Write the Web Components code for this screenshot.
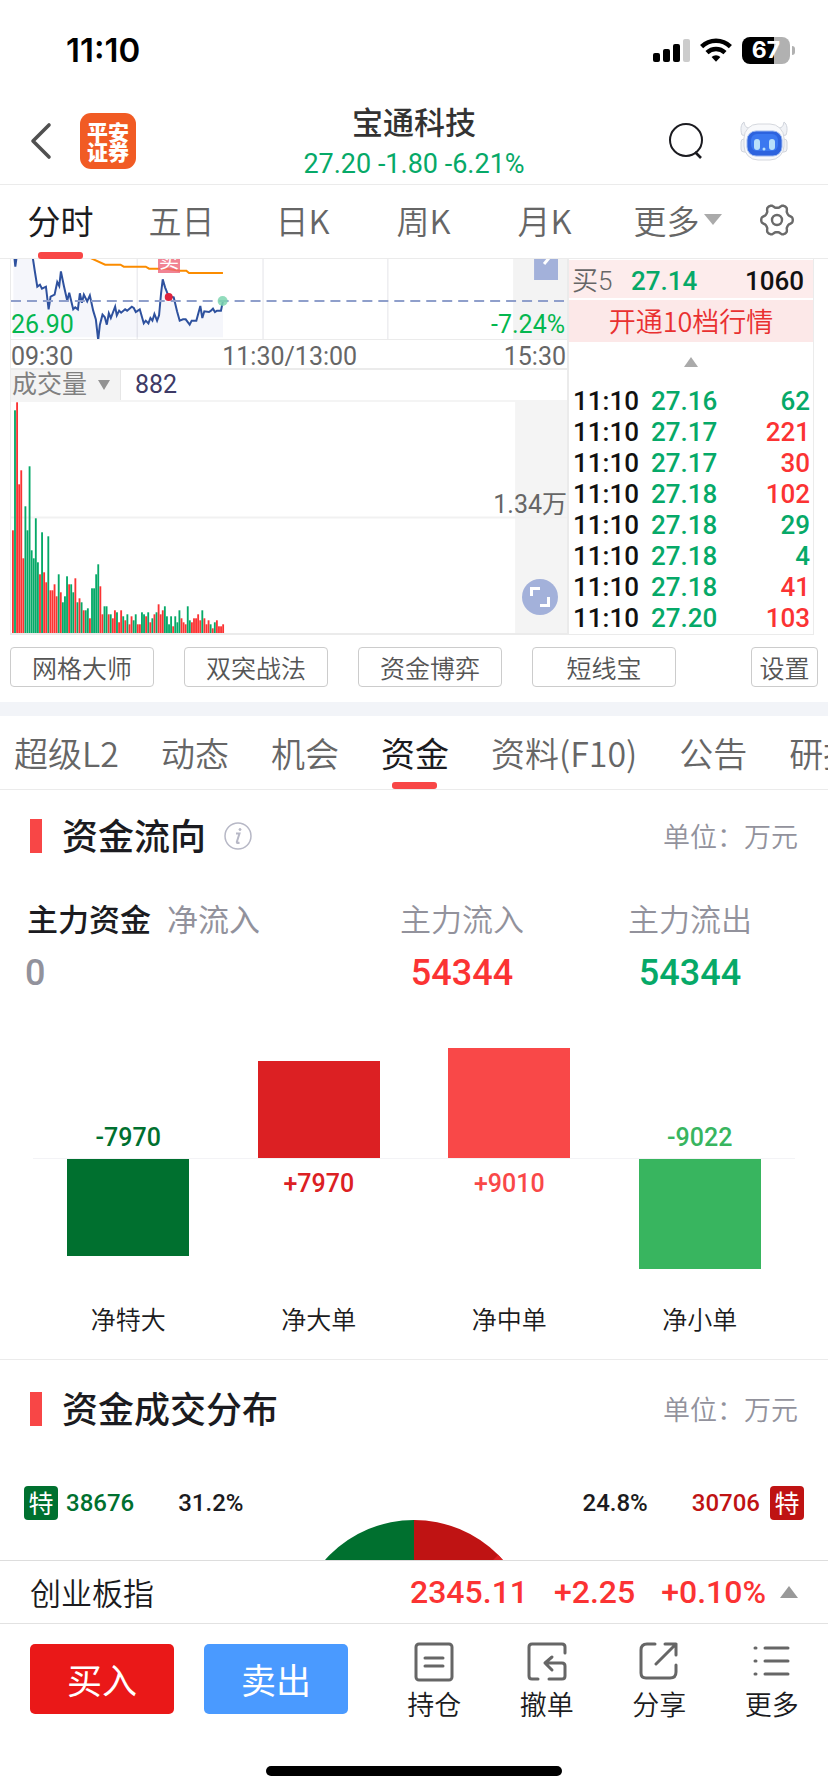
<!DOCTYPE html>
<html lang="zh-CN">
<head>
<meta charset="utf-8">
<meta name="viewport" content="width=device-width, initial-scale=1">
<title>宝通科技</title>
<style>
  :root {
    --cjk: "Noto Sans CJK SC", sans-serif;
    --num: Roboto, "Noto Sans CJK SC", sans-serif;
    --up: #fb3333;
    --down: #06a968;
    --accent: #f84646;
    --ink: #1b1b20;
    --soft: #666;
    --mute: #92929c;
    --line: #ebebeb;
  }
  html, body { margin: 0; }
  body { font-family: var(--cjk); color: var(--ink); background: #fff; }
</style>
</head>
<body>
<stock-app>
  <status-bar slot="top"></status-bar>
  <stock-header slot="top" name="宝通科技" quote="27.20 -1.80 -6.21%"></stock-header>
  <period-tabs slot="top"></period-tabs>

  <quote-board></quote-board>
  <tool-row></tool-row>
  <info-tabs></info-tabs>
  <fund-section heading="资金流向" unit="单位：万元" info>
    <fund-summary></fund-summary>
    <flow-chart>
      <flow-bar label="净特大" value="-7970" color="#00702f"></flow-bar>
      <flow-bar label="净大单" value="+7970" color="#dc2023"></flow-bar>
      <flow-bar label="净中单" value="+9010" color="#f94848"></flow-bar>
      <flow-bar label="净小单" value="-9022" color="#38b55f"></flow-bar>
    </flow-chart>
  </fund-section>
  <fund-section heading="资金成交分布" unit="单位：万元" class="later">
    <deal-split></deal-split>
  </fund-section>

  <index-ticker slot="dock"></index-ticker>
  <trade-bar slot="dock"></trade-bar>
</stock-app>

<script>
const base = `:host,*,::before,::after{box-sizing:border-box}button{font:inherit;color:inherit;background:none;border:0;padding:0;margin:0;cursor:pointer}svg{display:block}`;

function define(name, render, ready) {
  customElements.define(name, class extends HTMLElement {
    constructor() {
      super();
      this.attachShadow({ mode: 'open' });
    }
    connectedCallback() {
      const t = document.createElement('template');
      t.innerHTML = `<style>${base}</style>` + render(this);
      this.shadowRoot.replaceChildren(t.content.cloneNode(true));
      if (ready) ready(this.shadowRoot, this);
    }
  });
}

define('stock-app', () => `
<style>
  :host { display: flex; flex-direction: column; height: 100vh; }
  main { flex: 1; min-height: 0; overflow: hidden auto; scrollbar-width: none; }
  header { position: relative; z-index: 1; }
  footer { border-top: 1px solid #ddd; background: #fff; }
</style>
<header><slot name="top"></slot></header>
<main><slot></slot></main>
<footer><slot name="dock"></slot></footer>`);

define('status-bar', () => `
<style>
  :host { display: flex; align-items: center; justify-content: space-between; height: 100px; padding: 0 33px 0 66px; color: #000; }
  time { font: 600 33px/40px Inter, sans-serif; }
  .icons { display: flex; align-items: center; gap: 10px; }
  .battery { display: flex; align-items: center; gap: 2px; }
  .cell { width: 48px; height: 27px; border-radius: 8px; background: linear-gradient(90deg, #000 67%, #b1b1b1 67%); color: #fff; font: 700 23px/27px Inter, sans-serif; text-align: center; }
  .nub { width: 3px; height: 9px; border-radius: 0 3px 3px 0; background: #b1b1b1; }
</style>
<time>11:10</time>
<div class="icons">
  <svg width="37" height="24" viewBox="0 0 37 24"><rect y="15" width="7" height="9" rx="2"/><rect x="10" y="11" width="7" height="13" rx="2"/><rect x="20" y="6" width="7" height="18" rx="2"/><rect x="30" y="1" width="7" height="23" rx="2" fill="#ccc"/></svg>
  <svg width="32" height="24" viewBox="0 0 32 24"><g fill="none" stroke="#000" stroke-width="4.4"><path d="M1.6 8.6a20.5 20.5 0 0 1 28.8 0"/><path d="M7 14.6a13 13 0 0 1 18 0"/></g><path d="M11.6 19a6.4 6.4 0 0 1 8.8 0L16 23.8z"/></svg>
  <div class="battery"><div class="cell">67</div><div class="nub"></div></div>
</div>`);

define('stock-header', el => `
<style>
  :host { display: grid; grid-template-columns: 1fr auto 1fr; align-items: center; height: 85px; padding: 0 29px 4px; border-bottom: 1px solid var(--line); }
  .left, .right { display: flex; align-items: center; }
  .left { gap: 28px; }
  .right { justify-content: flex-end; gap: 36px; padding-right: 11px; }
  .logo { width: 56px; height: 56px; border-radius: 11px; background: #f15b24; color: #fff; font-weight: 900; font-size: 21px; line-height: 20px; display: grid; place-content: center; text-align: center; }
  .mid { text-align: center; }
  h1 { margin: 0; font-weight: 500; font-size: 31px; line-height: 42px; color: #333; }
  p { margin: 0; padding-top: 4px; font: 400 27px/36px var(--num); color: var(--down); }
</style>
<div class="left">
  <button aria-label="返回"><svg width="23" height="38" viewBox="0 0 23 38" fill="none" stroke="#505050" stroke-width="3.6" stroke-linecap="round" stroke-linejoin="round"><path d="M20 3 4 19l16 16"/></svg></button>
  <div class="logo">平安<br>证券</div>
</div>
<div class="mid"><h1>${el.getAttribute('name')}</h1><p>${el.getAttribute('quote')}</p></div>
<div class="right">
  <button aria-label="搜索"><svg width="36" height="38" viewBox="0 0 36 38" fill="none" stroke="#1b1b20" stroke-width="2"><circle cx="18" cy="18" r="16"/><path d="m27 30 6 6" stroke-width="2.6"/></svg></button>
  <button aria-label="智能助手"><svg width="48" height="40" viewBox="0 0 48 40">
    <g stroke="#d0d4dc" fill="#f0f2f6"><path d="M2 14C0 8 1 3 4 1c1 6 4 7 8 5l-4 9zM46 14c2-6 1-11-2-13-1 6-4 7-8 5l4 9z"/><rect x="1" y="18" width="8" height="13" rx="3"/><rect x="39" y="18" width="8" height="13" rx="3"/></g>
    <rect x="4" y="3" width="40" height="36" rx="14" fill="#f8f9fb" stroke="#d5d8de"/>
    <rect x="7" y="10" width="35" height="25" rx="9" fill="#2d63de" stroke="#9ab6ef"/>
    <rect x="11" y="13" width="27" height="17" rx="6" fill="#3b78f0"/>
    <rect x="14" y="18" width="6" height="11" rx="3" fill="#b9e0fa"/><rect x="29" y="18" width="6" height="11" rx="3" fill="#b9e0fa"/>
    <circle cx="24" cy="28" r="1.5" fill="#b9e0fa"/></svg></button>
</div>`);

define('period-tabs', () => `
<style>
  :host { display: grid; grid-template-columns: repeat(6, 121fr) 102fr; height: 74px; padding-bottom: 4px; border-bottom: 1px solid var(--line); font-weight: 350; font-size: 33px; line-height: 44px; color: var(--soft); }
  button { display: flex; align-items: center; justify-content: center; gap: 4px; position: relative; }
  .on { color: var(--ink); font-weight: 400; }
  .on::after { content: ""; position: absolute; bottom: -5px; width: 45px; height: 7px; border-radius: 3px; background: var(--accent); }
  .more { padding-left: 24px; }
</style>
<button class="on">分时</button><button>五日</button><button>日K</button><button>周K</button><button>月K</button>
<button class="more">更多<svg width="18" height="11" viewBox="0 0 18 11"><path d="M0 0h18L9 11z" fill="#aaa"/></svg></button>
<button aria-label="图表设置"><svg width="36" height="36" viewBox="-18 -18 36 36" fill="none" stroke="#6a6a6a" stroke-width="2.4" stroke-linejoin="round"><path id="gear"/><circle r="5"/></svg></button>`,
root => {
  const pts = [];
  for (let d = 0; d < 360; d += 5) {
    const w = Math.cos(6 * d * Math.PI / 180);
    const r = 14 + 1.8 * Math.sign(w) * Math.sqrt(Math.abs(w));
    const a = d * Math.PI / 180;
    pts.push((r * Math.cos(a)).toFixed(1) + ' ' + (r * Math.sin(a)).toFixed(1));
  }
  root.getElementById('gear').setAttribute('d', 'M' + pts.join('L') + 'Z');
});

define('quote-board', () => `
<style>
  :host { display: grid; grid-template-columns: 557fr 247fr; height: 376px; padding: 0 14px 0 10px; }
</style>
<chart-pane></chart-pane><order-pane></order-pane>`);

define('chart-pane', () => `
<style>
  :host { display: flex; flex-direction: column; min-width: 0; border-left: 1px solid var(--line); font: 400 25px/30px var(--num); color: var(--soft); }
  .price, .volume { position: relative; }
  .price { height: 81px; border-bottom: 1px solid var(--line); }
  svg.plot { width: 100%; height: 100%; }
  .low, .pct { position: absolute; color: #04b74f; bottom: -1px; }
  .low { left: 0; } .pct { right: 2px; }
  .times { display: flex; justify-content: space-between; height: 30px; border-bottom: 2px solid var(--line); padding-right: 1px; line-height: 34px; }
  .times span:nth-child(2) { flex: 1; padding-left: 149px; }
  .head { display: flex; align-items: center; gap: 14px; height: 32px; border-bottom: 2px solid #f4f4f4; color: #3d3a66; line-height: 32px; }
  .head button { display: flex; align-items: center; gap: 11px; height: 30px; padding: 0 10px 0 1px; background: #f3f3f3; border-right: 1px solid #e6e6e6; color: #808080; }
  .volume { flex: 1; border-bottom: 2px solid var(--line); }
  .scale { position: absolute; right: 0; top: 88px; }
  .full { position: absolute; right: 9px; bottom: 18px; }
  .badge { position: absolute; left: 147px; top: -9px; width: 22px; height: 23px; overflow: hidden; background: rgba(238,100,120,.8); color: #fff; font-size: 20px; line-height: 22px; text-align: center; }
  .clip { position: absolute; inset: 0; overflow: hidden; }
</style>
<div class="price">
  <svg class="plot" viewBox="0 0 557 80" preserveAspectRatio="none">
    <rect x="503" width="54" height="80" fill="#f3f3f3"/>
    <path d="M126.5 0v80M252.5 0v80M377.5 0v80" stroke="#ededf0" stroke-width="1.5"/>
    <g transform="translate(-11 -9) scale(.333333)">
      <path id="fill" fill="#3355b0" fill-opacity=".05"/>
      <path id="line" fill="none" stroke="#2e519e" stroke-width="6"/>
      <path d="M272 24 316 44H362L372 50H438L448 56H500L540 62H560L568 69H670" fill="none" stroke="#fb8c00" stroke-width="6"/>
    </g>
    <path d="M0 42H557" stroke="#8f9fcb" stroke-width="2" stroke-dasharray="10 6"/>
    <circle cx="158" cy="38" r="4" fill="#e0223c"/><circle cx="212" cy="42" r="5" fill="#7fd6b0" fill-opacity=".85"/>
    <path d="M524 0h24v21h-24z" fill="#a3b1da"/><path d="m534 5 5-6" stroke="#fff" stroke-width="3"/>
  </svg>
  <div class="clip"><span class="badge">卖</span></div>
  <span class="low">26.90</span><span class="pct">-7.24%</span>
</div>
<div class="times"><span>09:30</span><span>11:30/13:00</span><span>15:30</span></div>
<div class="head"><button>成交量<svg width="12" height="10" viewBox="0 0 12 10"><path d="M0 0h12L6 10z" fill="#929292"/></svg></button><span>882</span></div>
<div class="volume">
  <svg class="plot" viewBox="0 0 557 231" preserveAspectRatio="none">
    <rect x="505" width="52" height="231" fill="#f4f4f4"/>
    <path d="M0 115.5H557" stroke="#f1f1f1" stroke-width="2"/>
    <g id="bars"></g>
  </svg>
  <span class="scale">1.34万</span>
  <button class="full" aria-label="全屏"><svg width="36" height="36" viewBox="0 0 36 36" fill="none"><circle cx="18" cy="18" r="18" fill="#a3b1da"/><path d="M9.5 17V9.5H18M18 26.5h8.5V18" stroke="#fff" stroke-width="3"/></svg></button>
</div>`,
root => {
  const line = '98 20 104 60 112 110 120 104 126 116 138 110 146 178 152 140 164 134 172 96 178 108 183 64 192 108 202 152 208 128 220 178 226 172 234 178 240 130 246 158 252 134 262 154 270 136 280 182 288 208 295 270 300 225 308 194 315 202 321 224 327 190 333 204 346 170 351 196 358 182 364 188 376 178 382 182 396 170 402 174 408 186 420 178 432 220 438 212 446 220 452 204 458 212 464 192 472 212 478 196 484 130 489 88 496 112 508 142 514 140 522 142 532 184 540 212 550 208 558 208 570 224 576 212 590 212 602 168 608 204 614 184 628 186 634 182 640 176 646 186 652 182 664 182 670 153';
  root.getElementById('line').setAttribute('d', 'M43 20 46 50 50 20M' + line);
  root.getElementById('fill').setAttribute('d', 'M40 20H98L' + line + 'V262H40Z');
  const vols = 'R308 G668 R692 R446 R488 R224 G380 G308 G500 G248 G224 G344 G212 R176 G302 R182 R152 G290 R128 R128 R146 R110 G176 R122 G92 G110 G170 R146 G146 G122 R164 G92 R104 G92 R68 G68 G74 R44 G134 G134 G176 G206 R140 R56 G80 G80 R56 G56 R44 R68 G62 R32 R68 G50 R38 G56 R26 R50 G38 G56 R26 R26 G62 G56 R50 G62 R32 G44 R56 G62 R86 R56 R68 G80 G50 G26 G50 R20 G50 G32 G68 R44 R32 R26 G80 G38 R32 R44 R44 R56 R38 G68 R44 R26 R38 G26 R14 G32 R38 R20 R20 R26';
  root.getElementById('bars').innerHTML = vols.split(' ').map((v, i) => {
    const h = v.slice(1) / 3;
    return `<rect x="${(1 + i * 2.085).toFixed(2)}" y="${(231 - h).toFixed(1)}" width="1.85" height="${h.toFixed(1)}" fill="${v[0] === 'R' ? '#fb3333' : '#06a968'}"/>`;
  }).join('');
});

define('order-pane', () => {
  const rows = [['27.16', 62, 'd'], ['27.17', 221, 'u'], ['27.17', 30, 'u'], ['27.18', 102, 'u'], ['27.18', 29, 'd'], ['27.18', 4, 'd'], ['27.18', 41, 'u'], ['27.20', 103, 'u']];
  return `
<style>
  :host { display: flex; flex-direction: column; border: solid var(--line); border-width: 0 1px 1px 2px; font: 500 26px/30px var(--num); }
  .bid { display: grid; grid-template-columns: 59px 1fr auto; align-items: center; height: 38px; margin: 1px 0 2px; padding: 3px 9px 0 3px; background: #fdecec; color: #111; }
  .bid span { font-weight: 350; color: var(--soft); }
  .bid b { font-weight: 500; color: var(--down); }
  .bid i { font-style: normal; }
  .open { height: 42px; background: #fce8e8; color: #e93030; font: 350 27px/40px var(--cjk); }
  .up { display: grid; place-items: center; height: 40px; }
  table { flex: 1; width: 100%; margin-top: 4px; border-collapse: collapse; color: #111; }
  td { padding: 0; line-height: 31px; }
  td:first-child { width: 82px; padding-left: 4px; }
  td:nth-child(2) { color: var(--down); }
  td:last-child { text-align: right; padding-right: 3px; }
  .u { color: var(--up); } .d { color: var(--down); }
</style>
<div class="bid"><span>买5</span><b>27.14</b><i>1060</i></div>
<button class="open">开通10档行情</button>
<button class="up" aria-label="收起"><svg width="14" height="10" viewBox="0 0 14 10"><path d="M0 10h14L7 0z" fill="#aaa"/></svg></button>
<table><tbody>${rows.map(r => `<tr><td>11:10</td><td>${r[0]}</td><td class="${r[2]}">${r[1]}</td></tr>`).join('')}</tbody></table>`;
});

define('tool-row', () => `
<style>
  :host { display: flex; gap: 30px; height: 67px; padding: 12px 10px 15px; font-weight: 350; font-size: 25px; color: #555; }
  button { flex: 0 1 144px; height: 40px; border: 1px solid #ccc; border-radius: 4px; line-height: 36px; white-space: nowrap; }
  button:last-child { flex-basis: 67px; margin-left: auto; }
</style>
<button>网格大师</button><button>双突战法</button><button>资金博弈</button><button>短线宝</button><button>设置</button>`);

define('info-tabs', () => `
<style>
  :host { display: flex; gap: 42px; height: 88px; padding-left: 14px; border-top: 14px solid #f2f4f8; border-bottom: 1px solid var(--line); overflow: hidden; font-weight: 350; font-size: 34px; line-height: 44px; color: var(--soft); }
  button { flex: none; display: flex; align-items: center; justify-content: center; position: relative; }
  .on { color: var(--ink); font-weight: 400; }
  .on::after { content: ""; position: absolute; bottom: 0; width: 45px; height: 7px; border-radius: 3px; background: var(--accent); }
</style>
<button>超级L2</button><button>动态</button><button>机会</button><button class="on">资金</button><button>资料(F10)</button><button>公告</button><button>研报</button>`);

define('fund-section', el => `
<style>
  :host { display: block; border-bottom: 1px solid var(--line); }
  :host(.later) { padding-top: 3px; border: 0; }
  .head { display: flex; align-items: center; height: 92px; padding: 0 30px; }
  .head::before { content: ""; width: 12px; height: 34px; margin-right: 20px; background: var(--accent); }
  h2 { margin: 0; padding-bottom: 4px; font-weight: 500; font-size: 36px; line-height: 44px; }
  button { margin-left: 18px; }
  .unit { margin-left: auto; font-weight: 350; font-size: 27px; line-height: 36px; color: var(--mute); }
</style>
<div class="head"><h2>${el.getAttribute('heading')}</h2>${el.hasAttribute('info') ? `<button aria-label="说明"><svg width="28" height="28" viewBox="0 0 28 28" fill="none" stroke="#b7b8c6"><circle cx="14" cy="14" r="13" stroke-width="1.5"/><path d="M12 11.5h3.5L12.8 20q-.3 1.8 2.7.5" stroke-width="2"/><circle cx="16" cy="7.5" r="1" fill="#b7b8c6"/></svg></button>` : ''}<span class="unit">${el.getAttribute('unit')}</span></div>
<slot></slot>`);

define('fund-summary', () => `
<style>
  :host { display: grid; grid-template-columns: 348fr 228fr 228fr; row-gap: 11px; padding: 14px 24px 0 0; font-size: 31px; line-height: 44px; text-align: center; color: var(--mute); font-weight: 350; }
  .first { display: flex; gap: 16px; padding-left: 27px; white-space: nowrap; }
  .first b { font-weight: 500; color: var(--ink); }
  .zero { text-align: left; padding-left: 25px; }
  .v { font: 500 36px/44px var(--num); }
  .r { color: var(--up); } .g { color: var(--down); }
  .first span { font-weight: 400; }
</style>
<div class="first"><b>主力资金</b><span>净流入</span></div><div>主力流入</div><div>主力流出</div>
<div class="v zero">0</div><div class="v r">54344</div><div class="v g">54344</div>`);

define('flow-chart', () => `
<style>
  :host { display: grid; grid-template-columns: repeat(4, 1fr); padding: 0 33px 21px; }
</style>
<slot></slot>`);

define('flow-bar', el => {
  const v = el.getAttribute('value');
  const down = v.startsWith('-');
  const bar = `<div class="bar" style="height:${Math.round(Math.abs(v) / 82)}px"></div>`;
  const num = `<span>${v}</span>`;
  return `
<style>
  :host { display: block; text-align: center; }
  .top, .bottom { display: flex; flex-direction: column; align-items: center; color: ${el.getAttribute('color')}; font: 500 25px/32px var(--num); }
  .top { height: 163px; justify-content: flex-end; }
  .bottom { height: 140px; border-top: 1px solid #f3f3f6; }
  .bar { width: 64%; background: currentColor; }
  .top span { padding-bottom: 4px; }
  .bottom span { padding-top: 9px; }
  .label { font-weight: 350; font-size: 25px; line-height: 40px; }
</style>
<div class="top">${down ? num : bar}</div><div class="bottom">${down ? bar : num}</div><div class="label">${el.getAttribute('label')}</div>`;
});

define('deal-split', () => `
<style>
  :host { display: block; padding-top: 31px; }
  .row { display: flex; align-items: center; padding: 0 24px; font: 500 24px/36px var(--num); height: 34px; }
  .tag { width: 34px; height: 34px; border-radius: 4px; color: #fff; font: 400 25px/32px var(--cjk); text-align: center; }
  .g { color: #00702f; } .r { color: #bf1313; }
  .tag.g { background: #00702f; color: #fff; margin-right: 8px; } .tag.r { background: #bf1313; color: #fff; margin-left: 10px; }
  .row > :nth-child(2) { margin-right: 44px; }
  .row > :nth-child(4) { margin: 0 44px 0 auto; }
  svg { margin: 0 auto; }
</style>
<div class="row"><span class="tag g">特</span><span class="g">38676</span><span>31.2%</span><span>24.8%</span><span class="r">30706</span><span class="tag r">特</span></div>
<svg width="238" height="238" viewBox="-119 -119 238 238"><path d="M0 0V-119A119 119 0 0 0 0 119Z" fill="#00702f"/><path d="M0 0V-119A119 119 0 0 1 0 119Z" fill="#bf1313"/><path d="M78-78 84-84A119 119 0 0 1 0 119Z" fill="#dc2023"/></svg>`);

define('index-ticker', () => `
<style>
  :host { display: flex; align-items: center; gap: 26px; height: 63px; padding: 0 30px; border-bottom: 1px solid #e2e2e2; font: 500 32px/40px var(--num); color: var(--up); }
  .name { margin-right: auto; font: 350 31px/40px var(--cjk); color: var(--ink); }
  .last { display: flex; align-items: center; gap: 14px; }
</style>
<span class="name">创业板指</span><span>2345.11</span><span>+2.25</span>
<span class="last">+0.10%<svg width="18" height="12" viewBox="0 0 18 12"><path d="M0 12h18L9 0z" fill="#999"/></svg></span>`);

define('trade-bar', () => `
<style>
  :host { display: block; padding-top: 20px; }
  .row { display: grid; grid-template-columns: 144fr 144fr 450fr; column-gap: 30px; padding-left: 30px; }
  .buy, .sell { height: 70px; border-radius: 5px; color: #fff; font-size: 35px; line-height: 70px; }
  .buy { background: #ea1818; } .sell { background: #4a9aff; }
  nav { display: grid; grid-template-columns: repeat(4, 1fr); height: 79px; }
  nav button { display: flex; flex-direction: column; align-items: center; justify-content: flex-start; gap: 3px; font-weight: 350; font-size: 27px; line-height: 38px; margin-top: -2px; }
  nav svg { flex: none; fill: none; stroke: #666; stroke-width: 3; stroke-linecap: round; stroke-linejoin: round; }
  .home { width: 296px; height: 10px; border-radius: 5px; margin: 43px auto 16px; background: #000; }
</style>
<div class="row">
  <button class="buy">买入</button><button class="sell">卖出</button>
  <nav>
    <button><svg width="40" height="40" viewBox="0 0 40 40"><rect x="2" y="2" width="36" height="36" rx="3"/><path d="M11 16h18M11 24h18"/></svg>持仓</button>
    <button><svg width="40" height="40" viewBox="0 0 40 40"><path d="M38 11V5q0-3-3-3H5Q2 2 2 5v29q0 3 3 3h6M22 37h13q3 0 3-3V24q0-3-3-3H18M25 15l-7 6 7 7"/></svg>撤单</button>
    <button><svg width="40" height="40" viewBox="0 0 40 40"><path d="M16 2H8Q2 2 2 8v23q0 5 5 5h24q6 0 6-6v-7M26 2h11v11M37 2 17 22"/></svg>分享</button>
    <button><svg width="40" height="40" viewBox="0 0 40 40"><path d="M3 6h1M13 6h23M3 19h1M13 19h23M3 32h1M13 32h23"/></svg>更多</button>
  </nav>
</div>
<div class="home"></div>`);
</script>
</body>
</html>
